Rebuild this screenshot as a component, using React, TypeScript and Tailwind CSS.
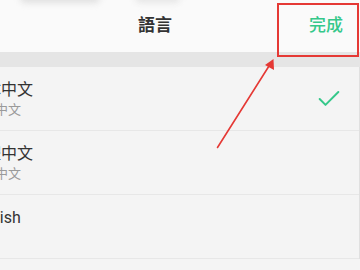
import { Check } from "lucide-react";

type Lang = {
  name: string;
  sub: string;
  checked?: boolean;
};

const langs: Lang[] = [
  { name: "简体中文", sub: "简体中文", checked: true },
  { name: "繁體中文", sub: "繁體中文" },
  { name: "English", sub: "" },
];

export default function App() {
  return (
    <div
      className="relative w-[360px] h-[270px] overflow-hidden bg-[#f4f4f4]"
      style={{ fontFamily: '"Roboto", "Noto Sans CJK TC", sans-serif' }}
    >
      {/* Header */}
      <div className="relative h-[52px] bg-[#fafafa]">
        {/* blurred content peeking above */}
        <div className="absolute -top-[7px] left-[20px] h-[10px] w-[80px] rounded-full bg-[#e0e0e0] blur-[3px]" />
        <div className="absolute -top-[7px] left-[135px] h-[10px] w-[45px] rounded-full bg-[#e6e6e6] blur-[3px]" />
        <div className="flex h-full items-center pl-[120px] pr-[17px]">
          <div className="w-[70px] text-center text-[17px] font-bold text-[#333333]">語言</div>
          <div className="flex-1" />
          <button className="text-[17px] font-medium text-[#35c88a]">完成</button>
        </div>
      </div>

      {/* Separator band */}
      <div className="h-[15px] bg-[#e5e5e5]" />

      {/* Language list */}
      <div className="border-r border-[#e0e0e0]">
        {langs.map((l) => (
          <div key={l.name} className="flex h-[64px] items-center border-b border-[#e7e7e7] pr-[16px]">
            <div className="-ml-[31px] flex-1 pt-[1px]">
              <div className="text-[16px] leading-[22px] text-[#333333]">{l.name}</div>
              <div className="h-[18px] text-[13px] leading-[18px] text-[#9a9a9a]">{l.sub}</div>
            </div>
            {l.checked && <Check size={28} strokeWidth={1.7} className="text-[#35c88a]" />}
          </div>
        ))}
      </div>

      {/* Annotation overlay */}
      <svg className="pointer-events-none absolute inset-0" width="360" height="270" viewBox="0 0 360 270">
        <rect x="278" y="4" width="80" height="52" fill="none" stroke="#e53935" strokeWidth="2" />
        <line x1="217.5" y1="147.5" x2="269" y2="66" stroke="#e53935" strokeWidth="1.6" strokeLinecap="round" />
        <polygon points="273.5,59 274,70 265,65" fill="#e53935" />
      </svg>
    </div>
  );
}
